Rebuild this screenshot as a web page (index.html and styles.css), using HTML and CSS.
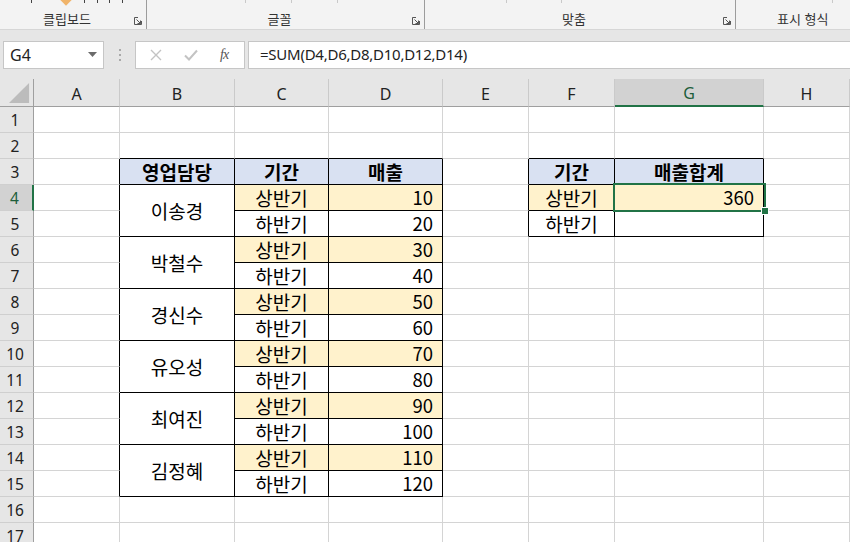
FILE: index.html
```html
<!DOCTYPE html>
<html lang="ko">
<head>
<meta charset="utf-8">
<title>Excel</title>
<link rel="stylesheet" href="styles.css">
</head>
<body>
<div class="ribbon">
  <div class="group g1">
    <div class="icons">
      <span class="tick dark" style="margin-left:31px"></span>
      <span class="diamond"></span>
      <span class="tick dark" style="margin-left:14px"></span>
      <span class="tick dark" style="margin-left:12px"></span>
      <span class="tick dark" style="margin-left:11px"></span>
      <span class="tick dark" style="margin-left:12px"></span>
    </div>
    <div class="glabel"><span class="gtext">클립보드</span><svg class="launch" viewBox="0 0 8 8"><path d="M0.5 7.5V0.5H4M0.5 7.5H7.5V4M2.5 2.5L6.5 6.5M6.5 3.5V6.5H3.5" fill="none" stroke="#555" stroke-width="1"/></svg></div>
  </div>
  <div class="group g2">
    <div class="icons">
      <span class="tick" style="margin-left:98px"></span>
      <span class="tick" style="margin-left:45px"></span>
      <span class="tick" style="margin-left:45px"></span>
    </div>
    <div class="glabel"><span class="gtext">글꼴</span><svg class="launch" viewBox="0 0 8 8"><path d="M0.5 7.5V0.5H4M0.5 7.5H7.5V4M2.5 2.5L6.5 6.5M6.5 3.5V6.5H3.5" fill="none" stroke="#555" stroke-width="1"/></svg></div>
  </div>
  <div class="group g3">
    <div class="icons">
      <span class="tick" style="margin-left:81px"></span>
      <span class="tick" style="margin-left:54px"></span>
    </div>
    <div class="glabel"><span class="gtext">맞춤</span><svg class="launch" viewBox="0 0 8 8"><path d="M0.5 7.5V0.5H4M0.5 7.5H7.5V4M2.5 2.5L6.5 6.5M6.5 3.5V6.5H3.5" fill="none" stroke="#555" stroke-width="1"/></svg></div>
  </div>
  <div class="group g4">
    <div class="icons">
      <span class="tick" style="margin-left:96px"></span>
    </div>
    <div class="glabel left"><span class="gtext">표시 형식</span></div>
  </div>
</div>

<div class="fbar">
  <div class="namebox"><span>G4</span><svg class="dd" viewBox="0 0 9 5"><path d="M0 0H9L4.5 5Z" fill="#6b6b6b"/></svg></div>
  <div class="dots"><i></i><i></i><i></i></div>
  <div class="fxbox">
    <svg class="ico" viewBox="0 0 12 12"><path d="M1 1L11 11M11 1L1 11" stroke="#c3c3c3" stroke-width="1.4" fill="none"/></svg>
    <svg class="ico" viewBox="0 0 14 12"><path d="M1 6.5L5 10.5L13 1.5" stroke="#c3c3c3" stroke-width="2" fill="none"/></svg>
    <span class="fx">fx</span>
  </div>
  <div class="finput">=SUM(D4,D6,D8,D10,D12,D14)</div>
</div>

<div class="sheet">
  <!-- header row -->
  <div class="corner"><svg viewBox="0 0 22 22" class="tri"><path d="M21 0V21H0Z" fill="#bcbcbc"/></svg></div>
  <div class="ch">A</div><div class="ch">B</div><div class="ch">C</div><div class="ch">D</div><div class="ch">E</div><div class="ch">F</div><div class="ch sel">G</div><div class="ch">H</div>

  <!-- row 1 -->
  <div class="rh">1</div><div class="c"></div><div class="c"></div><div class="c"></div><div class="c"></div><div class="c"></div><div class="c"></div><div class="c"></div><div class="c"></div>
  <!-- row 2 -->
  <div class="rh">2</div><div class="c"></div><div class="c bb"></div><div class="c bb"></div><div class="c bb"></div><div class="c"></div><div class="c bb"></div><div class="c bb"></div><div class="c"></div>
  <!-- row 3 -->
  <div class="rh">3</div><div class="c br"></div><div class="c t hd">영업담당</div><div class="c t hd">기간</div><div class="c t hd">매출</div><div class="c br"></div><div class="c t hd">기간</div><div class="c t hd">매출합계</div><div class="c"></div>
  <!-- row 4 -->
  <div class="rh rsel">4</div><div class="c br"></div><div class="c t m">이송경</div><div class="c t y">상반기</div><div class="c t y num">10</div><div class="c br"></div><div class="c t y">상반기</div><div class="c t y num active">360<span class="selbox"></span><span class="handle"></span></div><div class="c"></div>
  <!-- row 5 -->
  <div class="rh">5</div><div class="c br"></div><div class="c t">하반기</div><div class="c t num">20</div><div class="c br"></div><div class="c t">하반기</div><div class="c t"></div><div class="c"></div>
  <!-- row 6 -->
  <div class="rh">6</div><div class="c br"></div><div class="c t m">박철수</div><div class="c t y">상반기</div><div class="c t y num">30</div><div class="c"></div><div class="c"></div><div class="c"></div><div class="c"></div>
  <!-- row 7 -->
  <div class="rh">7</div><div class="c br"></div><div class="c t">하반기</div><div class="c t num">40</div><div class="c"></div><div class="c"></div><div class="c"></div><div class="c"></div>
  <!-- row 8 -->
  <div class="rh">8</div><div class="c br"></div><div class="c t m">경신수</div><div class="c t y">상반기</div><div class="c t y num">50</div><div class="c"></div><div class="c"></div><div class="c"></div><div class="c"></div>
  <!-- row 9 -->
  <div class="rh">9</div><div class="c br"></div><div class="c t">하반기</div><div class="c t num">60</div><div class="c"></div><div class="c"></div><div class="c"></div><div class="c"></div>
  <!-- row 10 -->
  <div class="rh">10</div><div class="c br"></div><div class="c t m">유오성</div><div class="c t y">상반기</div><div class="c t y num">70</div><div class="c"></div><div class="c"></div><div class="c"></div><div class="c"></div>
  <!-- row 11 -->
  <div class="rh">11</div><div class="c br"></div><div class="c t">하반기</div><div class="c t num">80</div><div class="c"></div><div class="c"></div><div class="c"></div><div class="c"></div>
  <!-- row 12 -->
  <div class="rh">12</div><div class="c br"></div><div class="c t m">최여진</div><div class="c t y">상반기</div><div class="c t y num">90</div><div class="c"></div><div class="c"></div><div class="c"></div><div class="c"></div>
  <!-- row 13 -->
  <div class="rh">13</div><div class="c br"></div><div class="c t">하반기</div><div class="c t num">100</div><div class="c"></div><div class="c"></div><div class="c"></div><div class="c"></div>
  <!-- row 14 -->
  <div class="rh">14</div><div class="c br"></div><div class="c t m">김정혜</div><div class="c t y">상반기</div><div class="c t y num">110</div><div class="c"></div><div class="c"></div><div class="c"></div><div class="c"></div>
  <!-- row 15 -->
  <div class="rh">15</div><div class="c br"></div><div class="c t">하반기</div><div class="c t num">120</div><div class="c"></div><div class="c"></div><div class="c"></div><div class="c"></div>
  <!-- row 16 -->
  <div class="rh">16</div><div class="c"></div><div class="c"></div><div class="c"></div><div class="c"></div><div class="c"></div><div class="c"></div><div class="c"></div><div class="c"></div>
  <!-- row 17 -->
  <div class="rh">17</div><div class="c"></div><div class="c"></div><div class="c"></div><div class="c"></div><div class="c"></div><div class="c"></div><div class="c"></div><div class="c"></div>
</div>
</body>
</html>
```

FILE: styles.css
```css
* { box-sizing: border-box; }
html, body {
  margin: 0;
  padding: 0;
  width: 850px;
  height: 542px;
  overflow: hidden;
  background: #ffffff;
  font-family: "Noto Sans CJK KR", "Noto Sans", sans-serif;
}

/* ribbon */
.ribbon {
  display: flex;
  height: 30px;
  background: #f3f3f3;
  border-bottom: 1px solid #d6d6d6;
}
.group {
  display: flex;
  flex-direction: column;
  height: 29px;
  border-right: 1px solid #9c9c9c;
  padding-bottom: 2px;
}
.g1 { width: 147px; }
.g2 { width: 278px; }
.g3 { width: 311px; }
.g4 { flex: 1; border-right: none; }
.icons {
  display: flex;
  align-items: flex-start;
  height: 11px;
}
.tick {
  display: block;
  width: 1px;
  height: 3px;
  background: #c9c9c9;
}
.tick.dark { background: #444; height: 3px; }
.diamond {
  display: block;
  width: 8px;
  height: 8px;
  margin-left: 30px;
  margin-top: -4px;
  background: #f0b46a;
  transform: rotate(45deg);
}
.glabel {
  flex: 1;
  display: flex;
  align-items: center;
  padding-right: 4px;
}
.gtext {
  flex: 1;
  text-align: center;
  font-size: 13px;
  color: #333;
  line-height: 14px;
}
.glabel.left .gtext { text-align: left; padding-left: 41px; }
.launch {
  width: 8px;
  height: 8px;
  margin-top: 4px;
}

/* formula bar */
.fbar {
  display: flex;
  align-items: center;
  height: 49px;
  background: #e6e6e6;
  padding: 0 0 0 3px;
}
.namebox {
  display: flex;
  align-items: center;
  justify-content: space-between;
  width: 101px;
  height: 28px;
  background: #fff;
  border: 1px solid #c6c6c6;
  padding: 0 6px 0 6px;
  font-family: "Noto Sans", "Open Sans", sans-serif;
  font-size: 16px;
  color: #222;
}
.dd { width: 9px; height: 5px; }
.dots {
  display: flex;
  flex-direction: column;
  gap: 3px;
  margin: 0 14px 0 15px;
}
.dots i {
  display: block;
  width: 2px;
  height: 2px;
  background: #a9a9a9;
}
.fxbox {
  display: flex;
  align-items: center;
  width: 110px;
  height: 28px;
  background: #fff;
  border: 1px solid #c6c6c6;
  padding-left: 14px;
}
.ico { width: 12px; height: 12px; margin-right: 22px; }
.ico + .ico { width: 14px; margin-right: 22px; }
.fx {
  font-family: "Liberation Serif", serif;
  font-style: italic;
  font-size: 14px;
  color: #555;
  letter-spacing: -1px;
}
.finput {
  flex: 1;
  height: 28px;
  margin-left: 3px;
  background: #fff;
  border: 1px solid #c6c6c6;
  border-right: none;
  padding-left: 11px;
  font-family: "Noto Sans", "Open Sans", sans-serif;
  font-size: 15px;
  letter-spacing: -0.25px;
  line-height: 25px;
  color: #222;
}

/* sheet */
.sheet {
  display: grid;
  grid-template-columns: 34px 86px 115px 94px 114px 86px 86px 149px 86px;
  grid-template-rows: 28px repeat(17, 26px);
}
.corner {
  background: #e6e6e6;
  border-right: 1px solid #9f9f9f;
  border-bottom: 1px solid #9f9f9f;
  position: relative;
}
.tri {
  position: absolute;
  left: 9px;
  top: 4px;
  width: 21px;
  height: 21px;
}
.ch {
  background: #e6e6e6;
  border-right: 1px solid #cacaca;
  border-bottom: 1px solid #9f9f9f;
  display: flex;
  align-items: center;
  justify-content: center;
  font-family: "Noto Sans", "Open Sans", sans-serif;
  font-size: 16px;
  color: #222;
  padding-top: 2px;
}
.ch.sel {
  background: #d2d2d2;
  border-bottom: 2px solid #217346;
  color: #1d5e3b;
}
.rh {
  background: #e6e6e6;
  border-right: 1px solid #9f9f9f;
  border-bottom: 1px solid #cfcfcf;
  display: flex;
  align-items: center;
  justify-content: center;
  font-family: "Noto Sans", "Open Sans", sans-serif;
  font-size: 15.5px;
  color: #222;
  padding-right: 3px;
}
.rh.rsel {
  background: #d2d2d2;
  border-right: 2px solid #217346;
  color: #1d5e3b;
}
.c {
  border-right: 1px solid #d4d4d4;
  border-bottom: 1px solid #d4d4d4;
  display: flex;
  align-items: center;
  justify-content: center;
  font-size: 19px;
  color: #000;
  line-height: 1;
  white-space: nowrap;
}
.c.br { border-right-color: #000; }
.c.bb { border-bottom-color: #000; }
.c.t {
  border-right-color: #000;
  border-bottom-color: #000;
}
.c.hd {
  background: #d9e1f2;
  font-weight: bold;
}
.c.y { background: #fff2cc; }
.c.m { grid-row: span 2; }
.c.num {
  justify-content: flex-end;
  padding-right: 9px;
  font-size: 18.5px;
}
.active { position: relative; }
.selbox {
  position: absolute;
  left: -2px;
  top: -2px;
  right: -3px;
  bottom: -2px;
  border: 2px solid #217346;
}
.handle {
  position: absolute;
  right: -5px;
  bottom: -4px;
  width: 6px;
  height: 6px;
  background: #217346;
  outline: 1px solid #fff;
}
```
